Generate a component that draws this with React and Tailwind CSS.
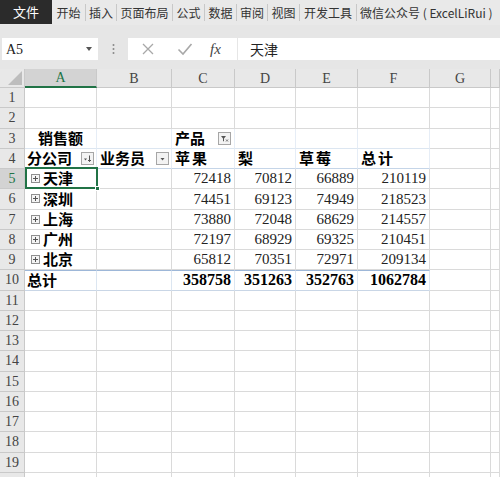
import React from "react";

const tabs = [
  ["开始", 33],
  ["插入", 30],
  ["页面布局", 55],
  ["公式", 31],
  ["数据", 31],
  ["审阅", 30],
  ["视图", 31],
  ["开发工具", 56],
];

const cols = ["A", "B", "C", "D", "E", "F", "G", ""];

const data = [
  ["天津", 72418, 70812, 66889, 210119],
  ["深圳", 74451, 69123, 74949, 218523],
  ["上海", 73880, 72048, 68629, 214557],
  ["广州", 72197, 68929, 69325, 210451],
  ["北京", 65812, 70351, 72971, 209134],
];

const cjk = { fontFamily: '"Noto Sans CJK SC", "Noto Sans", sans-serif' };
const serif = { fontFamily: '"Liberation Serif", "Noto Sans CJK SC", serif' };

const FilterBtn = ({ kind }) => (
  <span className="flex h-[13px] w-[13px] items-center justify-center border border-[#a6a6a6] bg-[#f3f3f3]">
    <svg width="9" height="9" viewBox="0 0 9 9">
      {kind === "sort" && (
        <>
          <path d="M1 4.5h3L2.5 6.5z" fill="#555" />
          <path d="M6.5 1.5v6M5 6l1.5 1.5L8 6" stroke="#555" fill="none" strokeWidth="1" />
        </>
      )}
      {kind === "drop" && <path d="M2.5 4h4L4.5 6.5z" fill="#555" />}
      {kind === "filter" && (
        <>
          <path d="M1 2h5L4 4.5v3L3 7V4.5z" fill="#555" />
          <path d="M6 5.5l2 2M8 5.5l-2 2" stroke="#555" strokeWidth="0.8" />
        </>
      )}
    </svg>
  </span>
);

const PlusBox = () => (
  <span className="mr-[3px] flex h-[9px] w-[9px] items-center justify-center border border-[#8f8f8f] bg-[#f4f4f4]">
    <svg width="7" height="7" viewBox="0 0 7 7">
      <path d="M1 3.5h5M3.5 1v5" stroke="#555" strokeWidth="1" />
    </svg>
  </span>
);

const Cell = ({ children, className = "" }) => (
  <div className={`flex h-[20.25px] items-center overflow-visible whitespace-nowrap border-b border-r border-[#dadada] bg-white ${className}`}>
    {children}
  </div>
);

const RowHead = ({ n, active }) => (
  <div
    className={`flex h-[20.25px] items-center justify-center border-b border-r border-[#c9c9c9] text-[14px] ${
      active ? "bg-[#d3d3d3] text-[#217346]" : "bg-[#e8e8e8] text-[#444]"
    }`}
    style={serif}
  >
    {n}
  </div>
);

const pv = "bg-[#dce6f1] border-r-[#e6edf6] border-b-[#dce6f1]";

function renderRow(r) {
  const cells = [];
  if (r === 3) {
    cells.push(
      <Cell key="a" className={`${pv} pl-[13px] font-bold text-[15px] text-black`}>
        <span style={cjk}>销售额</span>
      </Cell>,
      <Cell key="b" className={pv} />,
      <Cell key="c" className={`${pv} justify-between pl-[3px] pr-[3px] font-bold text-[15px]`}>
        <span style={cjk}>产品</span>
        <FilterBtn kind="filter" />
      </Cell>,
      <Cell key="d" className={pv} />,
      <Cell key="e" className={pv} />,
      <Cell key="f" className={pv} />
    );
  } else if (r === 4) {
    const b = "bg-[#dce6f1] border-r-[#e6edf6] border-b-[#c5d5e8]";
    cells.push(
      <Cell key="a" className={`${b} justify-between pl-[2px] pr-[2px] font-bold text-[15px]`}>
        <span style={cjk}>分公司</span>
        <FilterBtn kind="sort" />
      </Cell>,
      <Cell key="b" className={`${b} justify-between pl-[3px] pr-[2px] font-bold text-[15px]`}>
        <span style={cjk}>业务员</span>
        <FilterBtn kind="drop" />
      </Cell>,
      ...["苹果", "梨", "草莓", "总计"].map((t) => (
        <Cell key={t} className={`${b} pl-[3px] font-bold text-[15px]`}>
          <span style={cjk} className="tracking-[2px]">{t}</span>
        </Cell>
      ))
    );
  } else if (r >= 5 && r <= 9) {
    const d = data[r - 5];
    cells.push(
      <Cell key="a" className="pl-[6px] font-bold text-[15px]">
        <PlusBox />
        <span style={cjk}>{d[0]}</span>
      </Cell>,
      <Cell key="b" />,
      ...d.slice(1).map((v, i) => (
        <Cell key={i} className="justify-end pr-[3px] text-[15px] text-[#222]">
          <span style={serif}>{v}</span>
        </Cell>
      ))
    );
  } else if (r === 10) {
    const t = "bg-[#dce6f1] border-r-[#dce6f1] border-b-[#c9d6e6] border-t border-t-[#9db7d8]";
    cells.push(
      <Cell key="a" className={`${t} pl-[2px] font-bold text-[15px]`}>
        <span style={cjk}>总计</span>
      </Cell>,
      <Cell key="b" className={t} />,
      ...[358758, 351263, 352763, 1062784].map((v, i) => (
        <Cell key={i} className={`${t} justify-end pr-[3px] font-bold text-[16px]`}>
          <span style={serif}>{v}</span>
        </Cell>
      ))
    );
  } else {
    for (let i = 0; i < 6; i++) cells.push(<Cell key={i} />);
  }
  cells.push(<Cell key="g" />, <Cell key="h" />);
  return (
    <React.Fragment key={r}>
      <RowHead n={r <= 19 ? r : ""} active={r === 5} />
      {cells}
    </React.Fragment>
  );
}

export default function App() {
  const rows = Array.from({ length: 20 }, (_, i) => i + 1);
  return (
    <div className="relative h-[477px] w-[500px] overflow-hidden bg-[#e6e6e6]" style={cjk}>
      {/* ribbon tabs */}
      <div className="flex h-[25px] items-center bg-[#e9e9e9] text-[12px] text-[#333]">
        <div className="flex h-[24px] w-[52px] items-center justify-center self-start bg-[#2b2b2b] text-[13px] text-white">
          文件
        </div>
        {tabs.map(([t, w]) => (
          <div key={t} className="flex h-[25px] items-center">
            <div className="flex justify-center" style={{ width: w }}>
              {t}
            </div>
            <div className="h-[17px] w-px bg-[#c8c8c8]" />
          </div>
        ))}
        <div className="whitespace-nowrap pl-[3px]">微信公众号 ( ExcelLiRui )</div>
      </div>

      {/* formula bar */}
      <div className="mt-[13px] flex h-[22px] items-stretch">
        <div className="ml-[2px] flex w-[96px] items-center justify-between bg-white pl-[4px] pr-[6px] text-[14px] text-[#222]" style={serif}>
          <span>A5</span>
          <svg width="6" height="4" viewBox="0 0 6 4">
            <path d="M0 0h6L3 4z" fill="#555" />
          </svg>
        </div>
        <div className="flex w-[30px] items-center justify-center">
          <svg width="3" height="12" viewBox="0 0 3 12">
            <circle cx="1.5" cy="2" r="1" fill="#888" />
            <circle cx="1.5" cy="6" r="1" fill="#888" />
            <circle cx="1.5" cy="10" r="1" fill="#888" />
          </svg>
        </div>
        <div className="flex w-[109px] items-center bg-white">
          <svg className="ml-[13px]" width="14" height="14" viewBox="0 0 14 14">
            <path d="M2 2l10 10M12 2L2 12" stroke="#a8a8a8" strokeWidth="1.3" />
          </svg>
          <svg className="ml-[22px]" width="16" height="14" viewBox="0 0 16 14">
            <path d="M1.5 7.5l4.5 4.5L14.5 2" stroke="#a8a8a8" strokeWidth="1.6" fill="none" />
          </svg>
          <span className="ml-[17px] text-[15px] italic text-[#444]" style={serif}>
            fx
          </span>
        </div>
        <div className="ml-px flex flex-1 items-center bg-white pl-[12px] text-[14px] text-[#222]">天津</div>
      </div>

      {/* grid */}
      <div className="mt-[9px] grid grid-cols-[25px_72px_75px_63px_61px_62px_72px_61px_1fr]">
        <div className="relative h-[19px] border-b border-r border-[#c9c9c9] bg-[#e8e8e8]">
          <svg className="absolute bottom-[2px] right-[2px]" width="14" height="14" viewBox="0 0 14 14">
            <path d="M14 0v14H0z" fill="#bdbdbd" />
          </svg>
        </div>
        {cols.map((c, i) => (
          <div
            key={i}
            className={`flex h-[19px] items-center justify-center border-r text-[14px] ${
              c === "A"
                ? "border-b-2 border-b-[#217346] border-r-[#c9c9c9] bg-[#d3d3d3] text-[#217346]"
                : "border-b border-[#c9c9c9] bg-[#e8e8e8] text-[#444]"
            }`}
            style={serif}
          >
            {c}
          </div>
        ))}
        {rows.map(renderRow)}
      </div>

      {/* active cell A5 */}
      <div className="pointer-events-none absolute left-[25px] top-[167px] h-[22px] w-[73px] border-2 border-[#217346]">
        <div className="absolute -bottom-[4px] -right-[4px] h-[5px] w-[5px] border border-white bg-[#217346]" />
      </div>
    </div>
  );
}
